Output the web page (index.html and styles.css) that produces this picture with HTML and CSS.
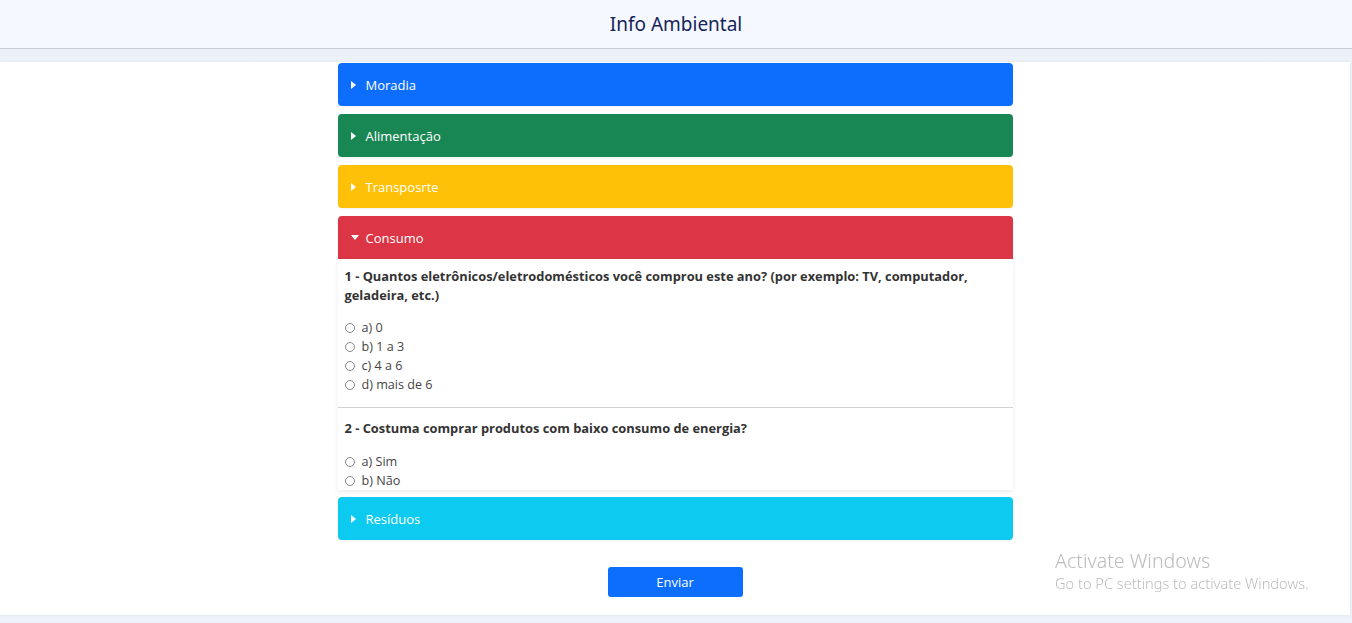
FILE: index.html
```html
<!DOCTYPE html>
<html lang="pt">
<head>
<meta charset="utf-8">
<title>Info Ambiental</title>
<link rel="stylesheet" href="styles.css">
</head>
<body>
<header class="topbar"><h1 class="title">Info Ambiental</h1></header>
<main class="main">
  <section class="card">
    <div class="accordion">
      <div class="acc-item">
        <div class="acc-head bg-blue"><span class="caret right"></span>Moradia</div>
      </div>
      <div class="acc-item">
        <div class="acc-head bg-green"><span class="caret right"></span>Alimentação</div>
      </div>
      <div class="acc-item">
        <div class="acc-head bg-yellow"><span class="caret right"></span>Transposrte</div>
      </div>
      <div class="acc-item open">
        <div class="acc-head bg-red"><span class="caret down"></span>Consumo</div>
        <div class="acc-body">
          <div class="question first">
            <p class="q-text">1 - Quantos eletrônicos/eletrodomésticos você comprou este ano? (por exemplo: TV, computador, geladeira, etc.)</p>
            <label class="opt"><span class="radio"></span>a) 0</label>
            <label class="opt"><span class="radio"></span>b) 1 a 3</label>
            <label class="opt"><span class="radio"></span>c) 4 a 6</label>
            <label class="opt"><span class="radio"></span>d) mais de 6</label>
          </div>
          <div class="question">
            <p class="q-text">2 - Costuma comprar produtos com baixo consumo de energia?</p>
            <label class="opt"><span class="radio"></span>a) Sim</label>
            <label class="opt"><span class="radio"></span>b) Não</label>
          </div>
        </div>
      </div>
      <div class="acc-item">
        <div class="acc-head bg-cyan"><span class="caret right"></span>Resíduos</div>
      </div>
    </div>
    <div class="actions"><button class="btn">Enviar</button></div>
  </section>
</main>
<div class="watermark">
  <div class="wm-title">Activate Windows</div>
  <div class="wm-sub">Go to PC settings to activate Windows.</div>
</div>
</body>
</html>
```
FILE: styles.css
```css
* { box-sizing: border-box; }
html, body { margin: 0; padding: 0; }
body {
  background: #eef2f9;
  font-family: "Open Sans", "Noto Sans", sans-serif;
  height: 623px;
  overflow: hidden;
}
.topbar {
  height: 49px;
  background: #f5f8fe;
  border-bottom: 1px solid #c9cdd5;
  display: flex;
  align-items: center;
  justify-content: center;
}
.title {
  margin: 0;
  font-family: "Noto Sans", "Open Sans", sans-serif;
  font-weight: 400;
  font-size: 19px;
  color: #15245a;
  padding-bottom: 1px;
}
.main {
  padding-top: 13px;
  padding-right: 2px;
  background: linear-gradient(#eaeff8, #eef2f9 13px);
}
.card {
  background: #fff;
  box-shadow: 0 0 3px rgba(0,0,0,0.08);
  padding: 1px 0 18px;
  height: 553px;
}
.accordion {
  width: 675px;
  margin: 0 auto;
  display: flex;
  flex-direction: column;
  gap: 8px;
}
.acc-item.open + .acc-item { margin-top: -1px; }
.acc-head {
  height: 43px;
  border-radius: 4px;
  display: flex;
  align-items: center;
  padding-left: 13px;
  color: #fff;
  font-size: 13px;
  box-shadow: 0 1px 3px rgba(0,0,0,0.06);
}
.open .acc-head { border-radius: 4px 4px 0 0; }
.bg-blue { background: #0d6efd; }
.bg-green { background: #198754; }
.bg-yellow { background: #ffc107; }
.bg-red { background: #dc3545; }
.bg-cyan { background: #0dcaf0; }
.caret {
  width: 0; height: 0;
  display: inline-block;
}
.caret.right {
  border-top: 4.5px solid transparent;
  border-bottom: 4.5px solid transparent;
  border-left: 5px solid #fff;
  margin-right: 10px;
}
.caret.down {
  border-left: 4.5px solid transparent;
  border-right: 4.5px solid transparent;
  border-top: 5px solid #fff;
  margin-right: 7px;
}
.acc-body {
  height: 231px;
  overflow: hidden;
  background: #fff;
  box-shadow: 0 2px 5px rgba(0,0,0,0.08);
}
.question {
  padding: 11px 7px 13px;
  border-bottom: 1px solid #d2d2d2;
}
.question.first { padding-top: 8px; }
.question + .question .q-text { margin-bottom: 14px; }
.q-text {
  margin: 0 0 13px;
  font-size: 12.85px;
  font-weight: 700;
  line-height: 19px;
  color: #333;
}
.opt {
  display: flex;
  align-items: center;
  height: 19px;
  font-size: 12.6px;
  color: #454545;
}
.radio {
  width: 10px; height: 10px;
  border: 1px solid #888;
  border-radius: 50%;
  margin-right: 7px;
  background: #fff;
}
.actions {
  display: flex;
  justify-content: center;
  margin-top: 27px;
}
.btn {
  width: 135px;
  height: 30px;
  border: 0;
  border-radius: 3px;
  background: #0d6efd;
  color: #fff;
  font-family: "Open Sans", sans-serif;
  font-size: 13px;
  padding: 0;
}
.watermark {
  position: fixed;
  left: 1055px;
  top: 550px;
  color: #bcbcbc;
  font-family: "Noto Sans", "Open Sans", sans-serif;
  pointer-events: none;
}
.wm-title { font-size: 19.6px; line-height: 22px; font-weight: 300; }
.wm-sub { font-size: 14.6px; line-height: 22px; font-weight: 300; }
```
